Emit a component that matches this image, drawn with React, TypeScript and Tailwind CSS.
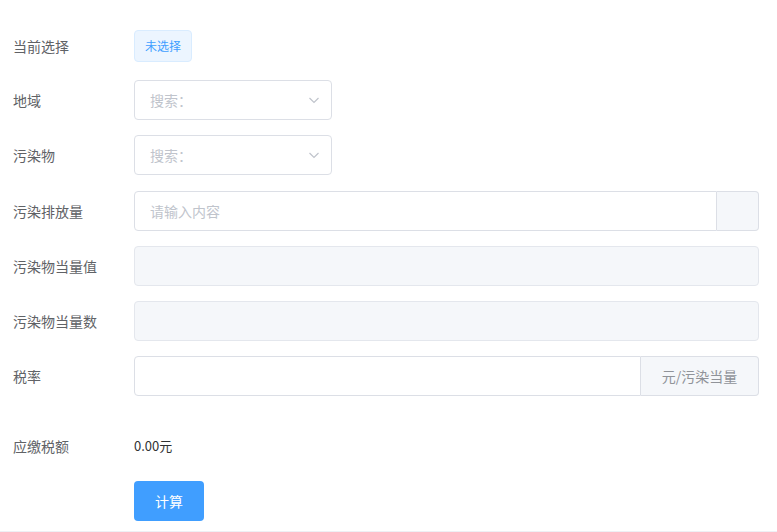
import React from "react";

const font = { fontFamily: '"Noto Sans CJK SC", "Microsoft YaHei", sans-serif' };

const Row = ({ label, children, className = "" }: { label: string; children: React.ReactNode; className?: string }) => (
    <div className={`flex h-10 items-center ${className}`}>
        <label className="w-[134px] shrink-0 pl-[13px] text-sm text-[#606266]">{label}</label>
        <div className="flex min-w-0 flex-1 items-center">{children}</div>
    </div>
);

const Chevron = () => (
    <svg width="14" height="14" viewBox="0 0 14 14" fill="none" stroke="#c0c4cc" strokeWidth="1.2">
        <path d="M2.5 5l4.5 4.5L11.5 5" />
    </svg>
);

const SelectBox = () => (
    <div className="flex h-10 w-[198px] items-center justify-between rounded border border-[#dcdfe6] bg-white pr-[10px] pl-[15px]">
        <span className="text-sm text-[#c0c4cc]">搜索：</span>
        <Chevron />
    </div>
);

const App = () => {
    return (
        <div style={font} className="w-[777px] border-b-2 border-[#eef0f5] bg-white pt-[25px] pb-[10px]">
            <div className="flex flex-col gap-[15px] pr-[18px]">
                <Row label="当前选择" className="pt-px">
                    <span className="inline-flex h-8 items-center rounded border border-[#d9ecff] bg-[#ecf5ff] px-[10px] text-xs text-[#409eff]">
                        未选择
                    </span>
                </Row>
                <Row label="地域">
                    <SelectBox />
                </Row>
                <Row label="污染物">
                    <SelectBox />
                </Row>
                <Row label="污染排放量" className="mt-px">
                    <div className="flex h-10 flex-1">
                        <input
                            placeholder="请输入内容"
                            className="h-10 min-w-0 flex-1 rounded-l border border-[#dcdfe6] bg-white px-[15px] text-sm text-[#606266] outline-none placeholder:text-[#c0c4cc]"
                        />
                        <div className="h-10 w-[42px] rounded-r border border-l-0 border-[#dcdfe6] bg-[#f5f7fa]" />
                    </div>
                </Row>
                <Row label="污染物当量值">
                    <div className="h-10 flex-1 rounded border border-[#e4e7ed] bg-[#f5f7fa]" />
                </Row>
                <Row label="污染物当量数">
                    <div className="h-10 flex-1 rounded border border-[#e4e7ed] bg-[#f5f7fa]" />
                </Row>
                <Row label="税率">
                    <div className="flex h-10 flex-1">
                        <input className="h-10 min-w-0 flex-1 rounded-l border border-[#dcdfe6] bg-white px-[15px] text-sm outline-none" />
                        <div className="flex h-10 w-[118px] items-center justify-center rounded-r border border-l-0 border-[#dcdfe6] bg-[#f5f7fa] text-sm text-[#909399]">
                            元/污染当量
                        </div>
                    </div>
                </Row>
                <Row label="应缴税额" className="mt-[15px]">
                    <span className="text-[13px] text-[#303133]">0.00元</span>
                </Row>
                <Row label="">
                    <button className="flex h-10 w-[70px] items-center justify-center rounded bg-[#409eff] text-sm text-white">
                        计算
                    </button>
                </Row>
            </div>
        </div>
    );
};

export default App;
